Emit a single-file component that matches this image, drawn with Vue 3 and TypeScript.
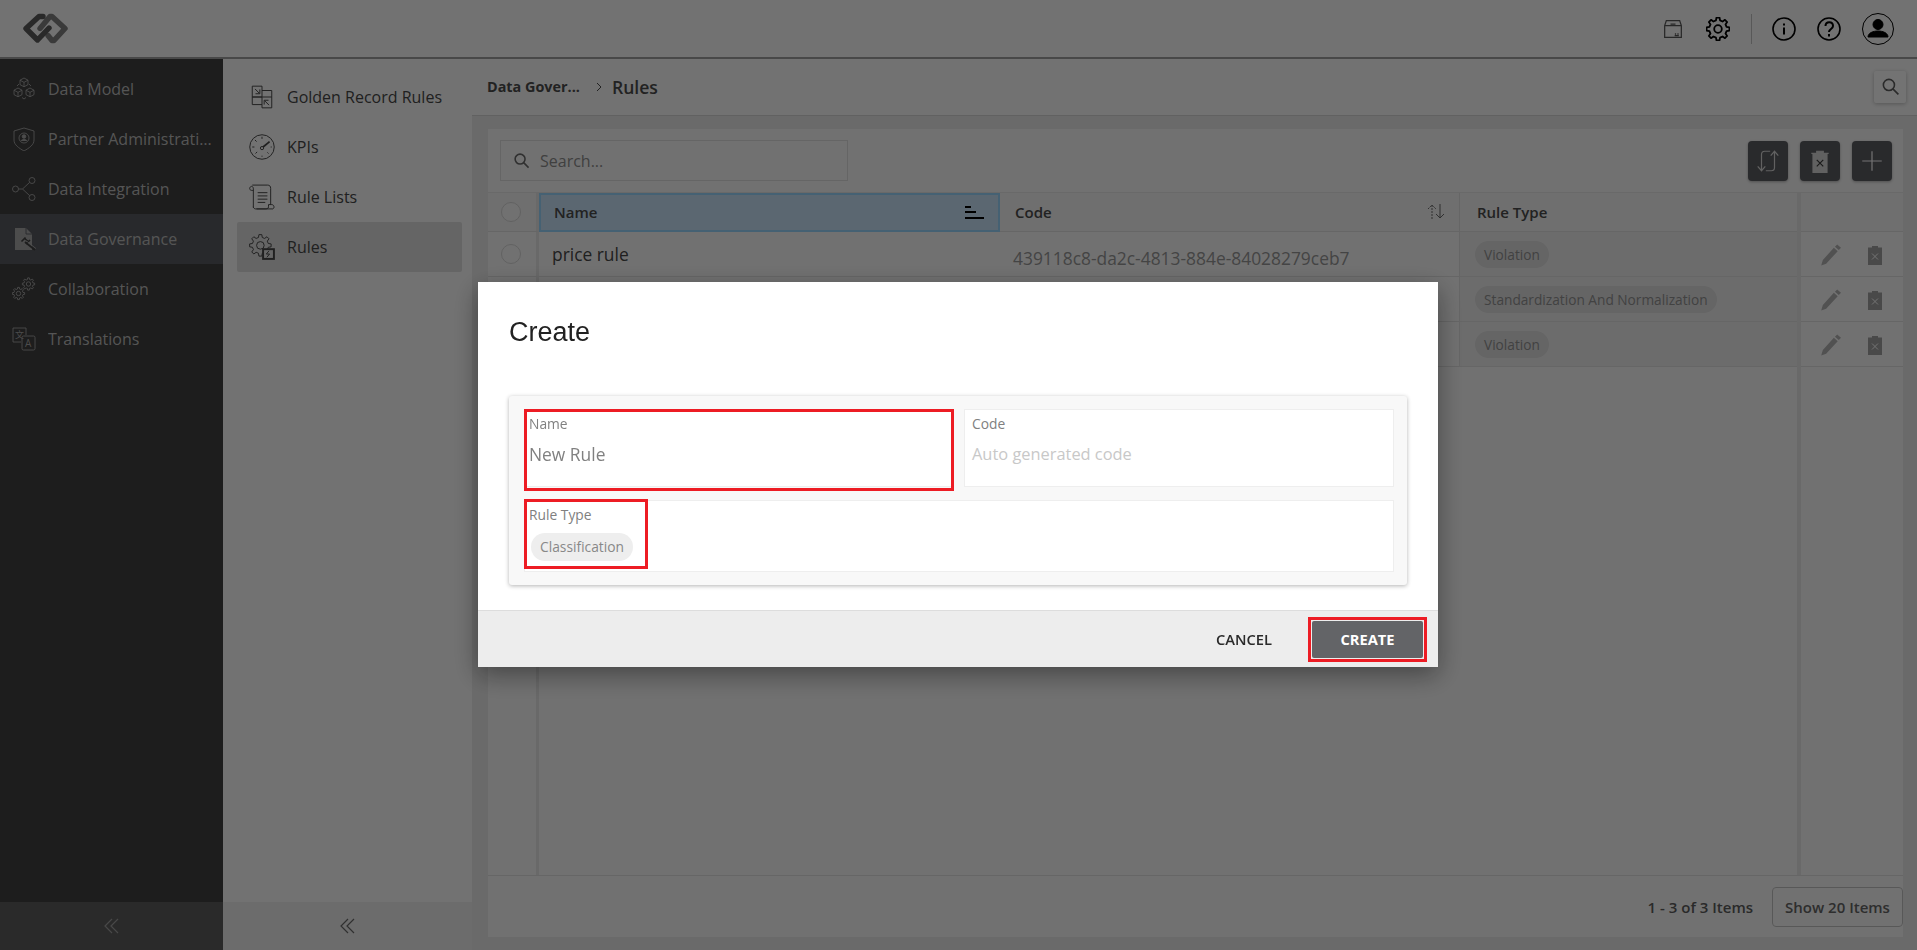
<script setup lang="ts">
interface NavItem {
  label: string
  icon: string
}

// toothed outline for the gear icons
function gear(cx: number, cy: number, outer: number, inner: number, teeth: number): string {
  const points: string[] = []
  const step = (Math.PI * 2) / teeth
  for (let i = 0; i < teeth; i++) {
    const a = i * step
    const corners: [number, number][] = [
      [inner, a - step * 0.3],
      [outer, a - step * 0.17],
      [outer, a + step * 0.17],
      [inner, a + step * 0.3]
    ]
    for (const [r, t] of corners) {
      points.push(`${(cx + r * Math.cos(t)).toFixed(2)} ${(cy + r * Math.sin(t)).toFixed(2)}`)
    }
  }
  return `M${points.join('L')}z`
}

const topGear = gear(12, 12, 11.5, 8.8, 8)

const primaryNav: NavItem[] = [
  {
    label: 'Data Model',
    icon: '<path d="M12 1l4 2.200v4.400l-4 2.200-4-2.200V3.200zM8 3.200l4 2.200 4-2.200M12 5.400v4.400M6 11l4 2.200v4.400l-4 2.200-4-2.200v-4.400zM2 13.200l4 2.200 4-2.200M6 15.400v4.400M18 11l4 2.200v4.400l-4 2.200-4-2.200v-4.400zM14 13.200l4 2.200 4-2.200M18 15.400v4.400M10 20.500l2 1.500 2-1.500M5 9l2-2M19 9l-2-2"/>'
  },
  {
    label: 'Partner Administration',
    icon: '<path d="M12 1l10 3v9c0 5-5 8-10 11C7 21 2 18 2 13V4z"/><circle cx="12" cy="11" r="5"/><circle cx="12" cy="9.500" r="1.800" fill="currentColor"/><path d="M9 14c.5-2 5.500-2 6 0" fill="currentColor"/>'
  },
  {
    label: 'Data Integration',
    icon: '<circle cx="3.500" cy="12" r="3"/><circle cx="20" cy="3.500" r="3"/><circle cx="20" cy="20.500" r="3"/><path d="M6.500 12h4l7-6.500M10.500 12l7 6.500"/>'
  },
  {
    label: 'Data Governance',
    icon: '<path d="M3 1h11l6 6v16H3z" fill="currentColor" stroke="none"/><path d="M14 1v6h6" stroke="#5a5c62"/><path d="M12 11l5 4M9.500 14.500l4-4M14 17l4-4" stroke="#404040" stroke-width="1.600"/><path d="M13 15l10 8" stroke="#404040" stroke-width="1.800"/><path d="M13 15l10 8" transform="translate(1.500 -1)"/>'
  },
  {
    label: 'Collaboration',
    icon: `<circle cx="16.500" cy="7" r="2.200"/><path d="${gear(16.5, 7, 6.2, 4.6, 8)}"/><circle cx="6.500" cy="16.500" r="2.200"/><path d="${gear(6.5, 16.5, 6.2, 4.6, 8)}"/>`
  },
  {
    label: 'Translations',
    icon: '<path d="M9 15H1V1h13v7"/><rect x="10" y="9" width="13" height="14" rx="1.500"/><text x="3" y="10.500" font-size="9" fill="currentColor" stroke="none" font-family="Noto Sans CJK SC">文</text><text x="13" y="20" font-size="10" fill="currentColor" stroke="none" font-family="Open Sans">A</text>'
  }
]

const secondaryNav: NavItem[] = [
  {
    label: 'Golden Record Rules',
    icon: '<path d="M3 2h9v10H3zM12 12h9v10h-9zM12 6h9v6M12 12H3v7h9"/><path d="M5.500 4.500l4 4M10 5v4H6M18.500 19.500l-4-4M14 19v-4h4"/>'
  },
  {
    label: 'KPIs',
    icon: '<circle cx="12" cy="12" r="11.300"/><circle cx="12" cy="13" r="1.500"/><path d="M13 12l6-5" stroke-width="1.600"/><path d="M12 2.500v2M3 12h2M21 12h-1M5.500 5.500L7 7M18 18l-1-1M6 18l1.500-1.500M12 20v1"/>'
  },
  {
    label: 'Rule Lists',
    icon: '<path d="M4 22V4.500C4 2 2 1.500 1 3c-1 2 0 3 3 3M3 1h14c2 0 3 1 3 3v15M7 23h15c2-1 1-4-1-4h-3v2c0 2-2 2-3 2H6c-1 0-2-1-2-2"/><path d="M8 8h9M8 11h9M8 14h9M8 17h7"/>'
  },
  {
    label: 'Rules',
    icon: `<circle cx="10.500" cy="10.500" r="3.500"/><path d="${gear(10.5, 10.5, 10, 7.5, 8)}"/><rect x="13" y="14" width="10" height="9" fill="#e0e0e0" stroke-width="1.800"/><path d="M18.500 15.500l-2.500 3h3l-2.500 3"/>`
  }
]

const ruleRows = [
  { name: 'price rule', code: '439118c8-da2c-4813-884e-84028279ceb7', type: 'Violation' },
  { name: '', code: '', type: 'Standardization And Normalization' },
  { name: '', code: '', type: 'Violation' }
]

const toolbarIcons = [
  '<path d="M14 3H9C7 3 6 4 6 6v15M2.500 17L6 21l3.500-4M10 21h5c2 0 3-1 3-3V3M14.500 7L18 3l3.500 4"/>',
  '<path d="M9 5V3h6v2h4v18H5V5z" fill="#d8d8d8" stroke="none"/><path d="M9 5V3h6v2M4 5h16" stroke="#d8d8d8"/><path d="M9 11l6 6M15 11l-6 6" stroke="#3a3a3a"/>',
  '<path d="M12 3v18M3 12h18" stroke="#fff"/>'
]
</script>

<template>
  <div class="page">
    <header class="topbar">
      <svg class="logo" viewBox="0 0 45 31" fill="none" stroke-width="5.400" stroke-linejoin="round" stroke-linecap="round">
        <path d="M17 15.500L27 3.500h2l13 12L31 27.500h-2l-4-5" stroke="#808080" />
        <path d="M20 3.500h-4L3 15.500l11.500 11.500L26 15" stroke="#5c5c5c" />
      </svg>
      <div class="top-actions">
        <svg class="top-icon box" viewBox="0 0 24 24" fill="none" stroke="currentColor" stroke-width="1.500">
          <path d="M2 8l2-6h16l2 6v14H2zM2 8h20M9 6h6M15 17v2M18 17v2M14 20h5" />
        </svg>
        <svg class="top-icon gear" viewBox="0 0 24 24" fill="none" stroke="currentColor" stroke-width="1.800" stroke-linejoin="round">
          <circle cx="12" cy="12" r="3.800" />
          <path :d="topGear" />
        </svg>
        <span class="top-divider"></span>
        <svg class="top-icon" viewBox="0 0 24 24" fill="none" stroke="currentColor" stroke-width="1.600">
          <circle cx="12" cy="12" r="11" />
          <path d="M12 10.500v7M12 6.500v2" stroke-width="2" />
        </svg>
        <svg class="top-icon help" viewBox="0 0 24 24" fill="none" stroke="currentColor" stroke-width="1.600">
          <circle cx="12" cy="12" r="11" />
          <path d="M8.500 9c0-5 7.500-5 7.500 0 0 3-4 3-4 6M12 17v2.500" stroke-width="2" />
        </svg>
        <svg class="top-icon avatar" viewBox="0 0 32 32" fill="none" stroke="currentColor" stroke-width="1">
          <circle cx="16" cy="16" r="15.500" />
          <circle cx="16" cy="11.500" r="5" fill="currentColor" />
          <path d="M6 24c0-8 20-8 20 0z" fill="currentColor" />
        </svg>
      </div>
    </header>

    <div class="shell">
      <nav class="primary-nav">
        <ul class="nav-list">
          <li v-for="item in primaryNav" :key="item.label" class="primary-item" :class="{ current: item.label === 'Data Governance' }">
            <svg class="nav-icon" viewBox="0 0 24 24" fill="none" stroke="currentColor" stroke-width=".9" v-html="item.icon"></svg>
            <span class="nav-text">{{ item.label }}</span>
          </li>
        </ul>
        <div class="collapse dark">
          <svg viewBox="0 0 16 16" fill="none" stroke="currentColor" stroke-width="1.200"><path d="M8 1L1 8l7 7M14 1L7 8l7 7" /></svg>
        </div>
      </nav>

      <nav class="secondary-nav">
        <ul class="nav-list sub">
          <li v-for="item in secondaryNav" :key="item.label" class="secondary-item" :class="{ current: item.label === 'Rules' }">
            <svg class="nav-icon" viewBox="0 0 24 24" fill="none" stroke="currentColor" stroke-width=".9" v-html="item.icon"></svg>
            <span class="nav-text">{{ item.label }}</span>
          </li>
        </ul>
        <div class="collapse">
          <svg viewBox="0 0 16 16" fill="none" stroke="currentColor" stroke-width="1.200"><path d="M8 1L1 8l7 7M14 1L7 8l7 7" /></svg>
        </div>
      </nav>

      <main class="content">
        <div class="crumbs">
          <span class="crumb-parent">Data Gover...</span>
          <svg class="crumb-sep" viewBox="0 0 8 10" fill="none" stroke="currentColor"><path d="M2 1l4 4-4 4" /></svg>
          <span class="crumb-current">Rules</span>
          <button class="crumb-search">
            <svg viewBox="0 0 24 24" fill="none" stroke="currentColor" stroke-width="2"><circle cx="10" cy="10" r="7" /><path d="M15 15l7 7" /></svg>
          </button>
        </div>

        <section class="panel">
          <div class="toolbar">
            <label class="search">
              <svg viewBox="0 0 24 24" fill="none" stroke="currentColor" stroke-width="2.200"><circle cx="10" cy="10" r="7" /><path d="M15 15l7 7" /></svg>
              <span>Search...</span>
            </label>
            <div class="tool-buttons">
              <button v-for="(icon, i) in toolbarIcons" :key="i" class="tool-btn">
                <svg viewBox="0 0 24 24" fill="none" stroke="currentColor" stroke-width="1.100" v-html="icon"></svg>
              </button>
            </div>
          </div>

          <div class="grid">
            <div class="cell head check-cell"><span class="radio"></span></div>
            <div class="cell head sorted">
              <span>Name</span>
              <svg class="sort-lines" viewBox="0 0 20 13" fill="none" stroke="currentColor" stroke-width="2"><path d="M1 1h6M1 6h11M1 12h19" /></svg>
            </div>
            <div class="cell head code-head">
              <span>Code</span>
              <svg class="sort-arrows" viewBox="0 0 18 15" fill="none" stroke="currentColor"><path d="M5 15V1M1 5l4-4 4 4" stroke-dasharray="2 1" /><path d="M13 0v14M9 10l4 4 4-4" /></svg>
            </div>
            <div class="cell head type-head">Rule Type</div>
            <div class="cell head spacer"></div>
            <div class="cell head"></div>

            <template v-for="row in ruleRows" :key="row.type + row.code">
              <div class="cell check-cell"><span class="radio"></span></div>
              <div class="cell name-cell">{{ row.name }}</div>
              <div class="cell code-cell">{{ row.code }}</div>
              <div class="cell type-cell"><span class="chip">{{ row.type }}</span></div>
              <div class="cell spacer"></div>
              <div class="cell actions">
                <svg class="pencil" viewBox="0 0 20 20" fill="currentColor"><path d="M13.500 3.500l3.500 3L6.500 18 2 19.500l1.500-5zM14.500 2.500l2-2 3.500 3-2 2z" /></svg>
                <svg class="clip" viewBox="0 0 14 20" fill="currentColor"><path d="M4 2.500V1h6v1.500h4V20H0V2.500z" /><path d="M4 8.500l6 6M10 8.500l-6 6" stroke="#fff" fill="none" /></svg>
              </div>
            </template>

            <div class="fill check-cell"></div>
            <div class="fill"></div>
            <div class="fill"></div>
            <div class="fill"></div>
            <div class="fill spacer"></div>
            <div class="fill"></div>
          </div>

          <footer class="pager">
            <span>1 - 3 of 3 Items</span>
            <button class="page-size">Show 20 Items</button>
          </footer>
        </section>
      </main>
    </div>

    <div class="overlay">
      <div class="dialog">
        <h2 class="dialog-title">Create</h2>
        <div class="dialog-body">
          <div class="form-card">
            <div class="field tight">
              <span class="field-label">Name</span>
              <span class="field-value">New Rule</span>
              <span class="mark name-mark"></span>
            </div>
            <div class="field">
              <span class="field-label">Code</span>
              <span class="field-value placeholder">Auto generated code</span>
            </div>
            <div class="field wide tight">
              <span class="field-label">Rule Type</span>
              <span class="type-pill">Classification</span>
              <span class="mark type-mark"></span>
            </div>
          </div>
        </div>
        <div class="dialog-footer">
          <button class="cancel">CANCEL</button>
          <div class="create-wrap">
            <button class="create">CREATE</button>
            <span class="mark create-mark"></span>
          </div>
        </div>
      </div>
    </div>
  </div>
</template>

<style>
html,
body {
  margin: 0;
  height: 100%;
  overflow: hidden;
}
</style>

<style scoped>
.page {
  display: flex;
  flex-direction: column;
  height: 950px;
  font-family: 'Open Sans', 'Liberation Sans', sans-serif;
  color: #4c4c4c;
  background: #ececec;
}

/* top bar */
.topbar {
  display: flex;
  align-items: center;
  justify-content: space-between;
  height: 59px;
  flex: none;
  box-sizing: border-box;
  padding: 0 23px;
  background: #fdfdfd;
  border-bottom: 2px solid #a0a0a0;
}
.top-actions {
  display: flex;
  align-items: center;
  color: #000;
}
.logo {
  width: 45px;
  height: 31px;
}
.top-icon {
  width: 24px;
  height: 24px;
  margin-left: 20px;
}
.top-icon.help {
  margin-left: 21px;
}
.top-icon.box {
  width: 20px;
  height: 20px;
  color: #5a5a5a;
}
.top-icon.gear {
  margin-left: 23px;
}
.top-icon.avatar {
  width: 32px;
  height: 32px;
  margin-left: 21px;
}
.top-divider {
  width: 1px;
  height: 30px;
  margin-left: 21px;
  background: #c4c4c4;
}

.shell {
  display: flex;
  flex: 1;
  min-height: 0;
}

/* side navigation */
.primary-nav,
.secondary-nav {
  display: flex;
  flex-direction: column;
  flex: none;
}
.primary-nav {
  width: 223px;
  background: #404040;
  color: #bcbcbc;
}
.primary-nav .nav-icon {
  color: #a8a8a8;
}
.secondary-nav {
  width: 249px;
  background: #fdfdfd;
  color: #484848;
}
.nav-list {
  flex: 1;
  margin: 0;
  padding: 5px 0 0;
  list-style: none;
}
.nav-list.sub {
  padding: 13px 10px 0 14px;
}
.primary-item,
.secondary-item {
  display: flex;
  align-items: center;
  height: 50px;
  font-size: 16px;
}
.primary-item {
  padding: 0 8px 0 12px;
}
.primary-item.current {
  background: #5a5c62;
}
.secondary-item {
  padding: 0 0 0 12px;
  border-radius: 2px;
}
.secondary-item.current {
  background: #e0e0e0;
}
.nav-icon {
  width: 24px;
  height: 24px;
  flex: none;
}
.secondary-item .nav-icon {
  width: 26px;
  height: 26px;
}
.nav-text {
  margin-left: 12px;
  min-width: 0;
  overflow: hidden;
  white-space: nowrap;
  text-overflow: ellipsis;
}
.collapse {
  display: flex;
  align-items: center;
  justify-content: center;
  height: 48px;
  flex: none;
  background: #f0f0f0;
  color: #6a6a6a;
}
.collapse.dark {
  background: #5e5e5e;
  color: #a0a0a0;
}
.collapse svg {
  width: 16px;
  height: 16px;
}

/* content */
.content {
  display: flex;
  flex-direction: column;
  flex: 1;
  min-width: 0;
}
.crumbs {
  display: flex;
  align-items: center;
  height: 57px;
  flex: none;
  box-sizing: border-box;
  padding: 0 11px 1px 15px;
  background: #fdfdfd;
  border-bottom: 1px solid #d8d8d8;
}
.crumb-parent {
  font-size: 14.4px;
  font-weight: 700;
}
.crumb-sep {
  width: 8px;
  height: 10px;
  margin: 0 9px 0 15px;
}
.crumb-current {
  font-size: 17.6px;
  font-weight: 600;
}
.crumb-search {
  display: flex;
  align-items: center;
  justify-content: center;
  width: 32px;
  height: 32px;
  margin-left: auto;
  padding: 0;
  border: 0;
  border-radius: 2px;
  background: #fff;
  box-shadow: 0 1px 4px rgba(0, 0, 0, 0.25);
  color: #5d5d5d;
}
.crumb-search svg {
  width: 19px;
  height: 19px;
}
.panel {
  display: flex;
  flex-direction: column;
  flex: 1;
  min-height: 0;
  margin: 13px 14px 13px 16px;
  background: #fbfbfb;
}
.toolbar {
  display: flex;
  align-items: center;
  justify-content: space-between;
  height: 64px;
  flex: none;
  box-sizing: border-box;
  padding: 0 11px 0 12px;
  border-bottom: 1px solid #e8e8e8;
}
.search {
  display: flex;
  align-items: center;
  gap: 10px;
  width: 348px;
  height: 41px;
  box-sizing: border-box;
  padding-left: 12px;
  border: 1px solid #e0e0e0;
  font-size: 16px;
  color: #8e8e8e;
}
.search svg {
  width: 17px;
  height: 17px;
  color: #6a6a6a;
}
.tool-buttons {
  display: flex;
  gap: 12px;
}
.tool-btn {
  display: flex;
  align-items: center;
  justify-content: center;
  width: 40px;
  height: 40px;
  padding: 0;
  border: 0;
  border-radius: 4px;
  background: #5c5d62;
  box-shadow: 0 1px 3px rgba(0, 0, 0, 0.3);
  color: #d8d8d8;
}
.tool-btn svg {
  width: 26px;
  height: 26px;
}

/* table */
.grid {
  display: grid;
  flex: 1;
  min-height: 0;
  grid-template-columns: 51px 461px 460px 337px 4px 102px;
  grid-template-rows: 39px 45px 45px 45px 1fr;
}
.cell {
  display: flex;
  align-items: center;
  box-sizing: border-box;
  min-width: 0;
  border-bottom: 1px solid #e2e2e2;
}
.head {
  padding-bottom: 1px;
  font-size: 15px;
  font-weight: 600;
  background: #f5f5f5;
}
.check-cell {
  justify-content: center;
  padding-right: 2px;
  border-right: 3px solid #e8e8e8;
}
.radio {
  width: 18px;
  height: 18px;
  border: 1px solid #d8d8d8;
  border-radius: 50%;
  background: #fbfbfb;
}
.sorted {
  justify-content: space-between;
  padding: 0 14px 1px 13px;
  background: #cae4fb;
  border: 2px solid #9ad8ff;
}
.sort-lines {
  width: 20px;
  height: 13px;
  color: #000;
}
.code-head {
  justify-content: space-between;
  padding: 0 14px 1px 15px;
  border-right: 1px solid #e2e2e2;
}
.sort-arrows {
  width: 18px;
  height: 15px;
  color: #6a6a6a;
}
.type-head {
  padding-left: 17px;
}
.name-cell {
  padding-left: 13px;
  font-size: 17.4px;
  color: #484848;
}
.code-cell {
  padding-left: 13px;
  padding-top: 8px;
  font-size: 17.4px;
  color: #989898;
  border-right: 1px solid #e2e2e2;
}
.type-cell {
  padding-left: 15px;
  background: #f0f0f0;
}
.chip {
  box-sizing: border-box;
  height: 27px;
  padding: 0 9px;
  border-radius: 14px;
  background: #e0e0e0;
  font-size: 13.7px;
  line-height: 27px;
  color: #929292;
}
.spacer {
  background: #e8e8e8;
  border-bottom-color: #e8e8e8;
}
.actions {
  gap: 27px;
  padding: 2px 0 0 18px;
  color: #b4b4b4;
}
.pencil {
  width: 22px;
  height: 22px;
}
.clip {
  width: 14px;
  height: 20px;
  color: #a2a2a2;
}
.fill {
  min-width: 0;
}
.pager {
  display: flex;
  align-items: center;
  justify-content: flex-end;
  gap: 19px;
  height: 62px;
  flex: none;
  box-sizing: border-box;
  border-top: 1px solid #e2e2e2;
  font-size: 15px;
  font-weight: 600;
  color: #5d5d5d;
}
.page-size {
  width: 131px;
  height: 40px;
  padding: 0;
  border: 1px solid #c4c4c4;
  border-radius: 4px;
  background: transparent;
  font: inherit;
  color: #666;
}

/* modal */
.overlay {
  position: fixed;
  inset: 0;
  display: flex;
  align-items: center;
  justify-content: center;
  padding: 0 1px 1px 0;
  background: rgba(0, 0, 0, 0.55);
}
.dialog {
  display: flex;
  flex-direction: column;
  width: 960px;
  height: 385px;
  background: #fff;
  box-shadow: 0 8px 24px rgba(0, 0, 0, 0.4);
}
.dialog-title {
  height: 114px;
  flex: none;
  box-sizing: border-box;
  margin: 0;
  padding: 33px 0 0 31px;
  font-family: 'Liberation Sans', Arial, sans-serif;
  font-size: 27px;
  font-weight: 400;
  line-height: 34px;
  color: #222;
}
.dialog-body {
  flex: 1;
  padding: 0 31px;
}
.form-card {
  display: grid;
  grid-template-columns: 430px 430px;
  grid-template-rows: 78px 72px;
  gap: 13px 10px;
  box-sizing: border-box;
  height: 189px;
  padding: 13px 13px 0 15px;
  border-radius: 3px;
  background: #f8f8f8;
  box-shadow: 0 1px 4px rgba(0, 0, 0, 0.3);
}
.field {
  position: relative;
  display: flex;
  flex-direction: column;
  align-items: flex-start;
  box-sizing: border-box;
  padding: 4px 7px;
  background: #fff;
  border: 1px solid #eee;
}
.field.tight {
  padding-left: 4px;
}
.field.wide {
  grid-column: 1 / 3;
}
.field-label {
  font-size: 13.8px;
  line-height: 20px;
  color: #808080;
}
.field-value {
  margin-top: 9px;
  font-size: 16.4px;
  line-height: 22px;
  color: #808080;
}
.tight .field-value {
  font-size: 17.4px;
}
.placeholder {
  color: #c8c8c8;
}
.type-pill {
  margin: 8px 0 0 2px;
  padding: 0 9px;
  height: 28px;
  border-radius: 14px;
  background: #eee;
  font-size: 13.8px;
  line-height: 28px;
  color: #888;
}
.mark {
  position: absolute;
  box-sizing: border-box;
  border: 3px solid #ed1c24;
  pointer-events: none;
}
.name-mark {
  inset: -1px -1px -5px -1px;
}
.type-mark {
  top: -2px;
  left: -1px;
  width: 124px;
  height: 70px;
}
.dialog-footer {
  display: flex;
  align-items: center;
  justify-content: flex-end;
  height: 57px;
  flex: none;
  box-sizing: border-box;
  padding-right: 15px;
  background: #ededed;
  border-top: 1px solid #ddd;
}
.cancel {
  margin-right: 40px;
  padding: 0;
  border: 0;
  background: transparent;
  font-family: inherit;
  font-size: 14.7px;
  font-weight: 600;
  color: #2a2a2a;
}
.create-wrap {
  position: relative;
}
.create {
  display: block;
  width: 111px;
  height: 37px;
  padding: 0;
  border: 0;
  border-radius: 2px;
  background: #636467;
  font-family: inherit;
  font-size: 14.7px;
  font-weight: 700;
  color: #fff;
}
.create-mark {
  inset: -4px;
}
</style>
